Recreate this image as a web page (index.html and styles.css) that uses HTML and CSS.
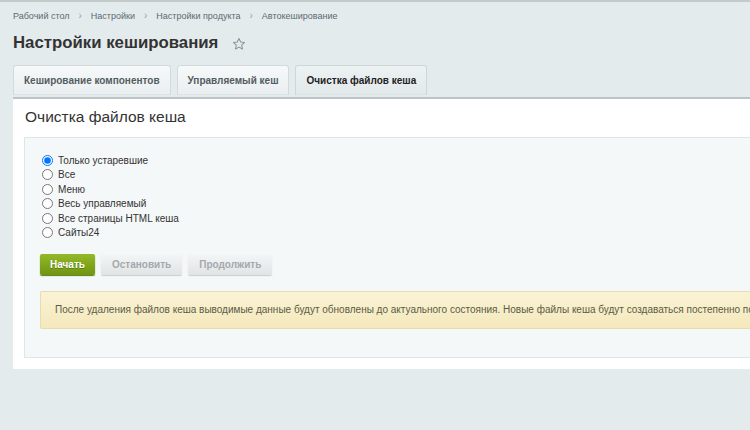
FILE: index.html
```html
<!DOCTYPE html>
<html lang="ru">
<head>
  <meta charset="UTF-8" />
  <title>Настройки кеширования</title>
  <link rel="stylesheet" href="styles.css">
</head>
<body>
  <div class="page">
    <div class="breadcrumbs">
      <a href="#">Рабочий стол</a>
      <span class="sep">›</span>
      <a href="#">Настройки</a>
      <span class="sep">›</span>
      <a href="#">Настройки продукта</a>
      <span class="sep">›</span>
      <a href="#">Автокеширование</a>
    </div>

    <div class="title-row">
      <h1>Настройки кеширования</h1>
      <!-- Star Icon -->
      <svg class="star" width="14" height="14" viewBox="0 0 24 24" fill="none">
        <path d="M12 2.5L14.9 8.6L21.5 9.4L16.6 14L17.9 20.6L12 17.3L6.1 20.6L7.4 14L2.5 9.4L9.1 8.6Z" stroke="#8a9499" stroke-width="1.8" stroke-linejoin="round"/>
      </svg>
    </div>

    <div class="tabs">
      <div class="tab">Кеширование компонентов</div>
      <div class="tab">Управляемый кеш</div>
      <div class="tab active">Очистка файлов кеша</div>
    </div>

    <div class="panel">
      <h2 class="panel-title">Очистка файлов кеша</h2>
      <div class="panel-body">
        <div class="options">
          <label><input type="radio" name="mode" checked> Только устаревшие</label>
          <label><input type="radio" name="mode"> Все</label>
          <label><input type="radio" name="mode"> Меню</label>
          <label><input type="radio" name="mode"> Весь управляемый</label>
          <label><input type="radio" name="mode"> Все страницы HTML кеша</label>
          <label><input type="radio" name="mode"> Сайты24</label>
        </div>

        <div class="buttons">
          <button class="btn btn-green">Начать</button>
          <button class="btn" disabled>Остановить</button>
          <button class="btn" disabled>Продолжить</button>
        </div>

        <div class="notice">
          После удаления файлов кеша выводимые данные будут обновлены до актуального состояния. Новые файлы кеша будут создаваться постепенно по мере обращения к страницам с кешируемыми компонентами.
        </div>
      </div>
    </div>
  </div>
</body>
</html>
```

FILE: styles.css
```css
* {
    margin: 0;
    padding: 0;
    box-sizing: border-box;
}

html, body {
    overflow: hidden;
}

body {
    background-color: #e4ebed;
    font-family: 'Liberation Sans', Arial, sans-serif;
    color: #333;
    border-top: 2px solid #c3cacc;
    height: 430px;
}

.page {
    width: 820px;
    padding: 0 0 0 13px;
}

.breadcrumbs {
    display: flex;
    align-items: center;
    gap: 9px;
    height: 26px;
    padding-top: 1px;
    font-size: 9px;
}

.breadcrumbs a {
    color: #5c6a72;
    text-decoration: none;
}

.breadcrumbs .sep {
    color: #9aa3a8;
    font-size: 10px;
}

.title-row {
    display: flex;
    align-items: center;
    gap: 14px;
    height: 29px;
}

.title-row h1 {
    font-size: 16.8px;
    font-weight: bold;
    color: #333;
}

.star {
    margin-top: 2px;
}

.tabs {
    display: flex;
    gap: 6px;
    margin-top: 8px;
    height: 30px;
}

.tab {
    display: flex;
    align-items: center;
    padding: 0 10px;
    font-size: 10px;
    font-weight: bold;
    color: #535c60;
    background: linear-gradient(#f7f9f9, #e9eef0);
    border: 1px solid #d3dadc;
    border-bottom: none;
    border-radius: 3px 3px 0 0;
    box-shadow: inset 0 -1px 0 #dde3e5;
}

.tab.active {
    color: #222;
    background: linear-gradient(#edf2f3, #e2e9eb);
    border-color: #cfd6d8;
}

.panel {
    margin-top: 2px;
    border-top: 2px solid #bcc4c6;
    background-color: #fff;
    padding: 0 0 10px 11px;
    height: 272px;
}

.panel-title {
    font-size: 15.5px;
    font-weight: normal;
    color: #333;
    height: 38px;
    padding-top: 9px;
    padding-left: 1px;
}

.panel-body {
    background-color: #f5f8f8;
    border: 1px solid #e0e6e7;
    border-right: none;
    padding: 16px 0 26px 15px;
    height: 221px;
}

.options {
    display: flex;
    flex-direction: column;
    gap: 2.6px;
}

.options label {
    display: flex;
    align-items: center;
    gap: 5px;
    font-size: 10px;
    color: #333;
    height: 12px;
}

.options input {
    width: 11px;
    height: 11px;
    margin: 0 0 0 2px;
}

.buttons {
    display: flex;
    gap: 6px;
    margin-top: 15px;
}

.btn {
    height: 21px;
    padding: 0 11px;
    font-family: 'Liberation Sans', Arial, sans-serif;
    font-size: 10px;
    font-weight: bold;
    color: #a3a9ac;
    background: linear-gradient(#f4f6f6, #dfe4e5);
    border: none;
    border-radius: 2px;
    box-shadow: 0 1px 1px #c6cdcf;
}

.btn-green {
    padding: 0 10px;
    color: #fff;
    background: linear-gradient(#93b92a, #6f9410);
    box-shadow: 0 1px 1px #5d7a10;
    text-shadow: 0 1px 0 #5a7a0a;
}

.notice {
    margin-top: 16px;
    height: 38px;
    display: flex;
    align-items: center;
    padding-left: 14px;
    white-space: nowrap;
    overflow: hidden;
    font-size: 10px;
    color: #5b5a48;
    background: linear-gradient(#faf3d4, #f4e8bc);
    border: 1px solid #e5dcb4;
    border-right: none;
    border-radius: 2px 0 0 2px;
}
```
